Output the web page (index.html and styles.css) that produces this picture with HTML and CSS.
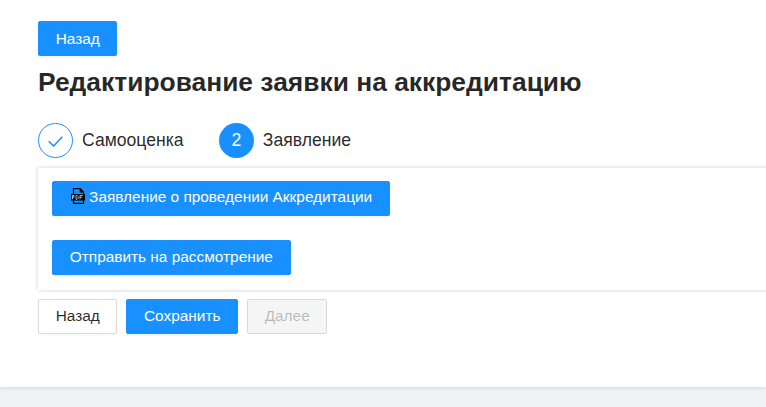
FILE: index.html
```html
<!DOCTYPE html>
<html lang="ru">
<head>
<meta charset="utf-8">
<title>Редактирование заявки на аккредитацию</title>
<link rel="stylesheet" href="styles.css">
</head>
<body>
<main class="page">
  <button class="btn primary">Назад</button>
  <h1 class="title">Редактирование заявки на аккредитацию</h1>
  <div class="steps">
    <div class="step step-done">
      <span class="circle outline">
        <svg class="check" viewBox="0 0 15 11" width="15" height="11"><path d="M.7 5.2 L5.6 10 L14.3 .7" fill="none" stroke="#1890ff" stroke-width="1.5"/></svg>
      </span>
      <span class="step-label">Самооценка</span>
    </div>
    <div class="step">
      <span class="circle filled">2</span>
      <span class="step-label">Заявление</span>
    </div>
  </div>
  <section class="card">
    <button class="btn primary doc">
      <svg class="pdf" viewBox="0 0 14 16" width="14" height="16">
        <path d="M2.5 6V.7H9.3L12.5 3.9V6M2.5 12.5V15.3H12.5V12.5M9.3.7V3.9H12.5" fill="none" stroke="#000" stroke-width="1.2"/>
        <rect x="0" y="6" width="14" height="6.6" fill="#000"/>
        <path d="M1.5 11.3V7.4H3V9.3H1.5M5 7.4V11.3H6.2L7.2 10.3V8.4L6.2 7.4H5M9 11.3V7.4H12M9 9.2H11.3" fill="none" stroke="#9fcfff" stroke-width=".9"/>
      </svg><span>Заявление о проведении Аккредитации</span>
    </button>
    <button class="btn primary send">Отправить на рассмотрение</button>
  </section>
  <div class="actions">
    <button class="btn">Назад</button>
    <button class="btn primary">Сохранить</button>
    <button class="btn disabled" disabled>Далее</button>
  </div>
</main>
</body>
</html>
```
FILE: styles.css
```css
* { box-sizing: border-box; }
html, body { margin: 0; height: 100%; }
body {
  background: #f0f2f5;
  font-family: "Liberation Sans", Arial, sans-serif;
  overflow: hidden;
}
.page {
  height: 387px;
  background: #fff;
  padding: 21px 0 0 38px;
  box-shadow: 0 1px 4px rgba(0, 21, 41, 0.12);
  display: flex;
  flex-direction: column;
  align-items: flex-start;
}
.btn {
  height: 35.2px;
  padding: 0 16.7px;
  border: 1px solid #d9d9d9;
  border-radius: 2px;
  background: #fff;
  color: rgba(0, 0, 0, 0.85);
  font: 15.4px "Liberation Sans", Arial, sans-serif;
  box-shadow: 0 2px 0 rgba(0, 0, 0, 0.015);
}
.primary {
  background: #1890ff;
  border-color: #1890ff;
  color: #fff;
  box-shadow: 0 2px 0 rgba(0, 0, 0, 0.045);
}
.disabled {
  background: #f5f5f5;
  color: rgba(0, 0, 0, 0.25);
  box-shadow: none;
}
.title {
  margin: 12px 0 0;
  height: 28px;
  font-size: 26.4px;
  line-height: 28px;
  font-weight: 700;
  color: rgba(0, 0, 0, 0.85);
}
.steps {
  display: flex;
  gap: 35.2px;
  margin-top: 26.4px;
}
.step {
  display: flex;
  align-items: center;
  gap: 8.8px;
}
.circle {
  width: 35.2px;
  height: 35.2px;
  border-radius: 50%;
  display: flex;
  align-items: center;
  justify-content: center;
  font-size: 17.6px;
}
.outline { border: 1px solid #1890ff; }
.check { margin-top: 3px; }
.filled { background: #1890ff; color: #fff; }
.step-label {
  font-size: 17.6px;
  color: rgba(0, 0, 0, 0.85);
}
.card {
  align-self: stretch;
  margin: 10px -20px 0 0;
  height: 122.1px;
  padding: 12.8px 13.6px;
  background: #fff;
  box-shadow: 0 0 4px rgba(0, 0, 0, 0.2);
  display: flex;
  flex-direction: column;
  align-items: flex-start;
  gap: 24px;
}
.doc {
  display: flex;
  align-items: center;
  padding: 0 16.7px 2px 18px;
  gap: 4.5px;
}
.send { padding: 0 17.2px; }
.pdf { margin-top: -3px; }
.actions {
  display: flex;
  gap: 8.8px;
  margin-top: 9px;
}
```
